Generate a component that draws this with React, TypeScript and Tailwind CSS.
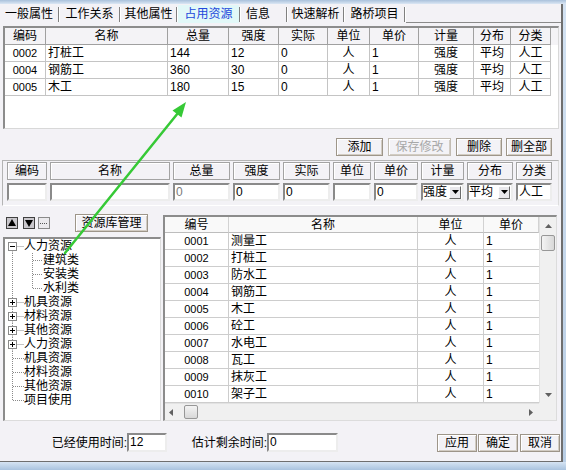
import clsx from "clsx";

const topCols = "grid grid-cols-[41px_122px_61px_50px_49px_42px_49px_55px_37px_40px]";
const rightCols = "grid grid-cols-[64px_189px_66px_55px]";

const topHead = ["编码", "名称", "总量", "强度", "实际", "单位", "单价", "计量", "分布", "分类"];
const topAlign = ["center", "left", "left", "left", "left", "center", "left", "center", "center", "center"];
const topRows = [
  ["0002", "打桩工", "144", "12", "0", "人", "1", "强度", "平均", "人工"],
  ["0004", "钢筋工", "360", "30", "0", "人", "1", "强度", "平均", "人工"],
  ["0005", "木工", "180", "15", "0", "人", "1", "强度", "平均", "人工"],
];

const resources = [
  ["0001", "测量工"],
  ["0002", "打桩工"],
  ["0003", "防水工"],
  ["0004", "钢筋工"],
  ["0005", "木工"],
  ["0006", "砼工"],
  ["0007", "水电工"],
  ["0008", "瓦工"],
  ["0009", "抹灰工"],
  ["0010", "架子工"],
];

type Kind = "first" | "plus" | "leaf" | "last" | "child" | "childLast";

const tree: [Kind, string][] = [
  ["first", "人力资源"],
  ["child", "建筑类"],
  ["child", "安装类"],
  ["childLast", "水利类"],
  ["plus", "机具资源"],
  ["plus", "材料资源"],
  ["plus", "其他资源"],
  ["plus", "人力资源"],
  ["leaf", "机具资源"],
  ["leaf", "材料资源"],
  ["leaf", "其他资源"],
  ["last", "项目使用"],
];

function Btn({ children, disabled, className }: { children: string; disabled?: boolean; className?: string }) {
  return (
    <button
      className={clsx(
        "h-[18px] border bg-[#f3f2f6] text-[12px] leading-none shadow-[inset_1px_1px_0_#ffffff,inset_-1px_-1px_0_#d2ccc3]",
        disabled ? "text-[#a8a8a8] border-[#c2bcb3]" : "text-black border-[#9d9589]",
        className
      )}
    >
      {children}
    </button>
  );
}

function Gutter({ kind }: { kind: Kind }) {
  const dot = { stroke: "#8a8a8a", strokeWidth: 1, strokeDasharray: "1 1" };
  const child = kind === "child" || kind === "childLast";
  const box = kind === "first" || kind === "plus";
  return (
    <svg width={child ? 38 : 19} height={14} className="shrink-0">
      {box ? (
        <>
          {kind === "plus" && <line x1={7.5} y1={0} x2={7.5} y2={3.5} {...dot} />}
          <line x1={7.5} y1={11.5} x2={7.5} y2={14} {...dot} />
          <line x1={11.5} y1={7.5} x2={19} y2={7.5} {...dot} />
          <rect x={3.5} y={3.5} width={8} height={8} fill="#fff" stroke="#8a8a8a" />
          <line x1={5} y1={7.5} x2={10} y2={7.5} stroke="#000" />
          {kind === "plus" && <line x1={7.5} y1={5} x2={7.5} y2={10} stroke="#000" />}
        </>
      ) : (
        <>
          <line x1={7.5} y1={0} x2={7.5} y2={kind === "last" ? 7.5 : 14} {...dot} />
          {!child && <line x1={8} y1={7.5} x2={19} y2={7.5} {...dot} />}
          {child && (
            <>
              <line x1={27.5} y1={0} x2={27.5} y2={kind === "childLast" ? 7.5 : 14} {...dot} />
              <line x1={28} y1={7.5} x2={38} y2={7.5} {...dot} />
            </>
          )}
        </>
      )}
    </svg>
  );
}

function Tri({ dir }: { dir: "up" | "down" | "left" | "right" }) {
  const pts = {
    up: "0,4 7,4 3.5,0",
    down: "0,0 7,0 3.5,4",
    left: "4,0 4,7 0,3.5",
    right: "0,0 0,7 4,3.5",
  }[dir];
  const vertical = dir === "up" || dir === "down";
  return (
    <svg width={vertical ? 7 : 4} height={vertical ? 4 : 7}>
      <polygon points={pts} fill="#606060" />
    </svg>
  );
}

function Sunken({ children, className }: { children?: React.ReactNode; className?: string }) {
  return (
    <div
      className={clsx(
        "bg-white border-2 border-t-[#8a8a8a] border-l-[#8a8a8a] border-r-[#ededed] border-b-[#ededed] text-[12px] leading-[14px] px-[1px] overflow-hidden whitespace-nowrap",
        className
      )}
    >
      {children}
    </div>
  );
}

function Drop({ value }: { value: string }) {
  return (
    <div className="bg-white border-2 border-t-[#8a8a8a] border-l-[#8a8a8a] border-r-[#ededed] border-b-[#ededed] flex items-center text-[12px]">
      <span className="flex-1 leading-[14px]">{value}</span>
      <span className="w-[12px] h-[13px] mr-[1px] flex items-center justify-center bg-[#e9e8ec] border border-t-white border-l-white border-r-[#6c6c6c] border-b-[#6c6c6c]">
        <svg width={7} height={4}>
          <polygon points="0,0 7,0 3.5,4" fill="#000" />
        </svg>
      </span>
    </div>
  );
}

export default function App() {
  const editHead = ["编码", "名称", "总量", "强度", "实际", "单位", "单价", "计量", "分布", "分类"];
  return (
    <div className="relative w-[566px] h-[470px] overflow-hidden flex flex-col bg-[#c5d8ec] font-['Liberation_Sans','Noto_Sans_CJK_SC',sans-serif] text-[12px] text-black">
      <div className="h-[4px] bg-linear-to-b from-[#a9c1db] to-[#dbe7f4]" />
      <div className="flex h-[458px]">
        <div className="w-[563px] h-full flex flex-col bg-[#f3f2f6] border-r-2 border-b border-[#6f6f6f]">
          {/* tabs */}
          <div className="h-[20px] flex items-stretch text-[12px]">
            <div className="w-[58px] flex items-center justify-center">一般属性</div>
            <span className="w-[2px] h-[15px] self-center border-l border-r border-l-[#808080] border-r-white" />
            <div className="w-[59px] flex items-center justify-center">工作关系</div>
            <span className="w-[2px] h-[15px] self-center border-l border-r border-l-[#808080] border-r-white" />
            <div className="w-[55px] flex items-center justify-center">其他属性</div>
            <span className="w-[2px] h-[15px] self-center border-l border-r border-l-[#808080] border-r-white" />
            <div className="w-[61px] my-[1px] flex items-center justify-center bg-[#e2f8f8] text-[#2147db]">占用资源</div>
            <span className="w-[2px] h-[15px] self-center border-l border-r border-l-[#808080] border-r-white" />
            <div className="w-[45px] pl-[5px] flex items-center">信息</div>
            <span className="w-[2px] h-[15px] self-center border-l border-r border-l-[#808080] border-r-white" />
            <div className="w-[55px] flex items-center justify-center">快速解析</div>
            <span className="w-[2px] h-[15px] self-center border-l border-r border-l-[#808080] border-r-white" />
            <div className="w-[59px] flex items-center justify-center">路桥项目</div>
            <span className="w-[2px] h-[15px] self-center border-l border-r border-l-[#808080] border-r-white" />
            <div className="flex-1 border-b border-[#8a8a8a] mb-[1px]" />
          </div>

          {/* used resources table */}
          <div className="mt-[2px] ml-[3px] w-[556px] h-[103px] bg-white border-t-2 border-l-2 border-[#8c8c8c] border-r border-b border-r-[#d8d8d8] border-b-[#d8d8d8]">
            <div className={clsx(topCols, "h-[17px] bg-[#f4f3f6]")}>
              {topHead.map((h) => (
                <div key={h} className="border-r border-b border-[#a0a0a0] flex items-center justify-center leading-none">
                  {h}
                </div>
              ))}
            </div>
            {topRows.map((r) => (
              <div key={r[0]} className={clsx(topCols, "h-[17px]")}>
                {r.map((c, i) => (
                  <div
                    key={i}
                    className={clsx(
                      "border-r border-b border-[#c4c4c4] flex items-center leading-none px-[2px] overflow-hidden",
                      topAlign[i] === "center" ? "justify-center" : "justify-start",
                      i === 0 && "text-[11px]"
                    )}
                  >
                    {c}
                  </div>
                ))}
              </div>
            ))}
          </div>

          {/* action buttons */}
          <div className="mt-[9px] h-[18px] flex justify-end pr-[9px]">
            <Btn className="w-[47px]">添加</Btn>
            <Btn disabled className="w-[63px] ml-[5px]">保存修改</Btn>
            <Btn className="w-[46px] ml-[5px]">删除</Btn>
            <Btn className="w-[46px] ml-[4px]">删全部</Btn>
          </div>

          {/* edit row */}
          <div className="mt-[4px] ml-[2px] w-[557px] h-[46px] border border-t-[#b4b4b4] border-l-[#b4b4b4] border-r-[#dcdcdc] border-b-white pl-[4px] pt-[1px]">
            <div className="grid grid-cols-[40px_120px_57px_47px_47px_38px_44px_43px_46px_36px] grid-rows-[18px_18px] gap-x-[3px] gap-y-[3px]">
              {editHead.map((h) => (
                <div
                  key={h}
                  className="border border-[#a3a3a3] shadow-[inset_1px_1px_0_#ffffff] flex items-center justify-center leading-none"
                >
                  {h}
                </div>
              ))}
              <Sunken />
              <Sunken />
              <Sunken className="text-[#7a7a7a]">0</Sunken>
              <Sunken>0</Sunken>
              <Sunken>0</Sunken>
              <Sunken />
              <Sunken>0</Sunken>
              <Drop value="强度" />
              <Drop value="平均" />
              <Sunken>人工</Sunken>
            </div>
          </div>

          {/* lower section */}
          <div className="mt-[8px] h-[207px] flex items-start">
            <div className="ml-[3px] w-[158px] h-full flex flex-col">
              <div className="h-[18px] flex items-center">
                <svg width={12} height={12} className="ml-[3px]">
                  <rect x={0.5} y={0.5} width={11} height={11} fill="#c9c7cc" stroke="#404040" />
                  <polygon points="2,9 10,9 6,2" fill="#000" />
                </svg>
                <svg width={12} height={12} className="ml-[5px]">
                  <rect x={0.5} y={0.5} width={11} height={11} fill="#c9c7cc" stroke="#404040" />
                  <polygon points="2,3 10,3 6,10" fill="#000" />
                </svg>
                <svg width={12} height={12} className="ml-[3px]">
                  <rect x={0.5} y={0.5} width={11} height={11} fill="#ebeaed" stroke="#8a8a8a" />
                  <line x1={2} y1={6.5} x2={10} y2={6.5} stroke="#555" strokeDasharray="1 1" />
                </svg>
                <Btn className="w-[73px] ml-[25px]">资源库管理</Btn>
              </div>
              <div className="mt-[5px] flex-1 bg-white border-t-2 border-l-2 border-[#8c8c8c] border-r border-b border-r-[#dcdcdc] border-b-[#dcdcdc]">
                {tree.map(([k, label], i) => (
                  <div key={i} className="h-[14px] flex items-center">
                    <Gutter kind={k} />
                    <span className="leading-[14px] whitespace-nowrap">{label}</span>
                  </div>
                ))}
              </div>
            </div>

            <div className="ml-[2px] mt-[1px] w-[394px] h-[206px] flex bg-white border-t-2 border-l-2 border-[#8c8c8c] border-r border-b border-r-[#dcdcdc] border-b-[#dcdcdc]">
              <div className="w-[374px] flex flex-col">
                <div className={clsx(rightCols, "h-[16px] bg-[#f9f9f9]")}>
                  {["编号", "名称", "单位", "单价"].map((h) => (
                    <div key={h} className="border-r border-b border-r-[#d2d2d2] border-b-[#bdbdbd] flex items-center justify-center leading-none">
                      {h}
                    </div>
                  ))}
                </div>
                {resources.map(([code, name]) => (
                  <div key={code} className={clsx(rightCols, "h-[17px]")}>
                    <div className="border-r border-b border-[#cdcdcd] flex items-center justify-center text-[11px] leading-none">{code}</div>
                    <div className="border-r border-b border-[#cdcdcd] flex items-center px-[2px] leading-none">{name}</div>
                    <div className="border-r border-b border-[#cdcdcd] flex items-center justify-center leading-none">人</div>
                    <div className="border-b border-[#cdcdcd] flex items-center px-[2px] leading-none">1</div>
                  </div>
                ))}
                <div className="h-[17px] flex items-center bg-[#f0f0f0] border-t border-[#e2e2e2]">
                  <div className="w-[12px] flex justify-center">
                    <Tri dir="left" />
                  </div>
                  <div className="ml-[7px] w-[14px] h-[14px] rounded-[2px] border border-[#979797] bg-linear-to-b from-[#f4f4f4] to-[#d8d8d8]" />
                  <div className="flex-1" />
                  <div className="w-[17px] flex justify-center">
                    <Tri dir="right" />
                  </div>
                </div>
              </div>
              <div className="w-[17px] flex flex-col">
                <div className="h-[186px] flex flex-col bg-[#f0f0f0] border-l border-[#e2e2e2]">
                  <div className="h-[17px] flex items-center justify-center">
                    <Tri dir="up" />
                  </div>
                  <div className="mt-[1px] mx-[1px] h-[16px] rounded-[2px] border border-[#979797] bg-linear-to-r from-[#f4f4f4] to-[#d8d8d8]" />
                  <div className="flex-1" />
                  <div className="h-[17px] flex items-center justify-center">
                    <Tri dir="down" />
                  </div>
                </div>
                <div className="flex-1 bg-[#f0f0f0]" />
              </div>
            </div>
          </div>

          {/* bottom row */}
          <div className="mt-[12px] h-[19px] flex items-center">
            <span className="ml-[47px] w-[80px] text-right leading-none">已经使用时间:</span>
            <Sunken className="w-[40px] h-[19px] leading-[15px]">12</Sunken>
            <span className="ml-[20px] w-[80px] text-right leading-none">估计剩余时间:</span>
            <Sunken className="w-[71px] h-[19px] leading-[15px]">0</Sunken>
            <Btn className="w-[40px] ml-[99px]">应用</Btn>
            <Btn className="w-[40px] ml-[1px]">确定</Btn>
            <Btn className="w-[40px] ml-[2px]">取消</Btn>
          </div>
        </div>
        <div className="flex-1 bg-linear-to-b from-[#d3e2f2] to-[#b9cee5]" />
      </div>
      <div className="flex-1 bg-linear-to-b from-[#d6e4f3] to-[#a9c3df]" />

      {/* annotation arrow */}
      <svg className="absolute inset-0 pointer-events-none" width={566} height={470}>
        <line x1={65} y1={253} x2={178} y2={113} stroke="#36c936" strokeWidth={2.5} strokeLinecap="round" />
        <polygon points="186,102 181.5,117.5 172.5,110.5" fill="#36c936" />
      </svg>
    </div>
  );
}
